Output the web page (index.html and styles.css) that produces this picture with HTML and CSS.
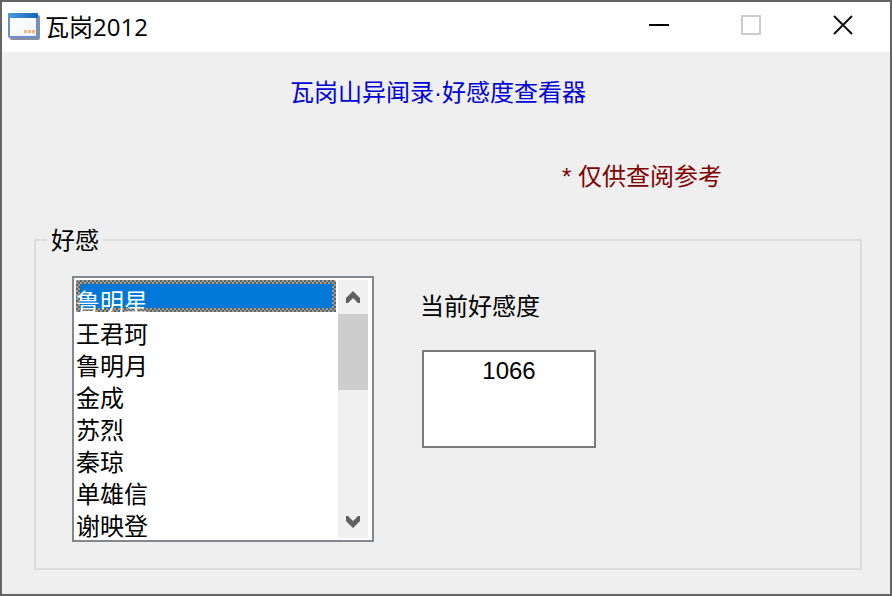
FILE: index.html
```html
<!DOCTYPE html>
<html lang="zh-CN">
<head>
  <meta charset="UTF-8">
  <meta name="viewport" content="width=device-width, initial-scale=1.0">
  <title>瓦岗2012</title>
  <link rel="stylesheet" href="styles.css">
</head>
<body>
  <div class="window">
    <!-- 标题栏 -->
    <header class="titlebar">
      <svg class="app-icon" width="32" height="28" viewBox="0 0 32 28">
        <defs>
          <linearGradient id="bar" x1="0" x2="1" y1="0" y2="0">
            <stop offset="0" stop-color="#4c9be0"/>
            <stop offset="1" stop-color="#1763b6"/>
          </linearGradient>
          <linearGradient id="pane" x1="0" x2="1" y1="0" y2="1">
            <stop offset="0" stop-color="#ffffff"/>
            <stop offset="1" stop-color="#eef3fb"/>
          </linearGradient>
        </defs>
        <rect x="2" y="2" width="30" height="25" rx="2" fill="#8a909c"/>
        <rect x="0" y="0" width="30" height="25" rx="2" fill="#6b8fca"/>
        <rect x="2" y="4" width="26" height="19" fill="url(#pane)"/>
        <rect x="0" y="0" width="30" height="5" rx="1" fill="url(#bar)"/>
        <path d="M16 17h3v3h-3zM20 17h3v3h-3zM24 17h3v3h-3z" fill="#f0b870"/>
      </svg>
      <h1 class="title">瓦岗2012</h1>
      <div class="controls">
        <button class="control" type="button" aria-label="最小化">
          <svg width="20" height="20" viewBox="0 0 20 20"><path d="M0 10h20" stroke="#000" stroke-width="2"/></svg>
        </button>
        <button class="control" type="button" aria-label="最大化" disabled>
          <svg width="20" height="20" viewBox="0 0 20 20"><path d="M1 1h18v18H1z" fill="none" stroke="#ccc" stroke-width="2"/></svg>
        </button>
        <button class="control" type="button" aria-label="关闭">
          <svg width="20" height="20" viewBox="0 0 20 20"><path d="M1 1l18 18M19 1L1 19" stroke="#111" stroke-width="2"/></svg>
        </button>
      </div>
    </header>

    <main class="content">
      <h2 class="heading">瓦岗山异闻录·好感度查看器</h2>
      <p class="note">* 仅供查阅参考</p>

      <fieldset class="group">
        <legend class="legend">好感</legend>
        <div class="listbox">
          <select class="names" size="8" aria-label="好感">
            <option class="name" selected>鲁明星</option>
            <option class="name">王君珂</option>
            <option class="name">鲁明月</option>
            <option class="name">金成</option>
            <option class="name">苏烈</option>
            <option class="name">秦琼</option>
            <option class="name">单雄信</option>
            <option class="name">谢映登</option>
          </select>
          <div class="scroll">
            <button class="arrow" type="button" aria-label="向上">
              <svg width="16" height="14" viewBox="0 0 16 14"><path d="M8 1l7 7v5h-2L8 8l-5 5H1V8z" fill="#606060"/></svg>
            </button>
            <div class="thumb"></div>
            <button class="arrow arrow-down" type="button" aria-label="向下">
              <svg width="16" height="14" viewBox="0 0 16 14"><path d="M8 14l7-7V2h-2L8 7 3 2H1v5z" fill="#606060"/></svg>
            </button>
          </div>
        </div>
        <div class="field">
          <label class="label" for="value">当前好感度</label>
          <textarea class="value" id="value">1066</textarea>
        </div>
      </fieldset>
    </main>
  </div>
</body>
</html>
```
FILE: styles.css
```css
*{
  box-sizing: border-box;
}
body{
  margin: 0;
  color: #000;
  font-family: "Liberation Sans", "Noto Sans CJK SC", sans-serif;
  font-size: 24px;
  line-height: 32px;
}
.window{
  display: flex;
  flex-direction: column;
  min-height: 100vh;
  border: 2px solid #646464;
  background: #efefef;
}

/* 标题栏 */
.titlebar{
  display: flex;
  align-items: center;
  height: 50px;
  padding-left: 6px;
  background: #fff;
}
.title{
  flex: 1;
  margin: 0 0 0 5px;
  font-family: "Open Sans", "Noto Sans CJK SC", sans-serif;
  font-size: 24px;
  font-weight: 400;
  line-height: 32px;
}
.controls{
  display: flex;
  align-self: flex-start;
  padding-right: 1px;
}
.control{
  display: flex;
  align-items: center;
  justify-content: center;
  width: 92px;
  height: 46px;
  padding: 0;
  border: 0;
  background: none;
}

.content{
  display: flex;
  flex: 1;
  flex-direction: column;
  padding: 25px 28px 24px 32px;
}
.heading{
  margin: 0;
  padding-right: 20px;
  color: #0000d8;
  font-size: 24px;
  font-weight: 400;
  text-align: center;
}
.note{
  margin: 52px 0 0;
  padding-right: 140px;
  color: #800000;
  text-align: right;
}

/* 好感 */
.group{
  display: flex;
  flex: 1;
  gap: 48px;
  align-items: flex-start;
  margin: 30px 0 0;
  padding: 19px 36px 26px;
  border: 2px solid #dcdcdc;
}
.legend{
  margin-left: -25px;
  padding: 2px 4px 0;
}
.listbox{
  display: flex;
  gap: 2px;
  width: 302px;
  height: 266px;
  padding: 2px 4px 2px 2px;
  border: 2px solid #828790;
  background: #fff;
}
.names{
  flex: 1;
  min-width: 0;
  height: 258px;
  padding: 0;
  border: 0;
  outline: 0;
  background: #fff;
  color: #000;
  font: inherit;
  overflow: hidden;
}
.name{
  height: 32px;
  min-height: 32px;
  padding: 3px 0 0;
}
/* 选中项带虚线焦点框 */
.name:checked{
  overflow: hidden;
  background:
    linear-gradient(#0078d7, #0078d7) center / calc(100% - 8px) calc(100% - 8px) no-repeat,
    repeating-conic-gradient(#d0905c 0 25%, #28739f 0 50%) 0 0 / 4px 4px;
  -webkit-text-fill-color: #fff;
}
.scroll{
  display: flex;
  flex-direction: column;
  width: 30px;
  background: #f0f0f0;
}
.arrow{
  display: flex;
  align-items: center;
  justify-content: center;
  height: 34px;
  padding: 0;
  border: 0;
  background: none;
}
.arrow-down{
  margin-top: auto;
}
.thumb{
  height: 76px;
  background: #cdcdcd;
}
.field{
  display: flex;
  flex-direction: column;
  gap: 27px;
  width: 174px;
  padding-top: 15px;
}
.label{
  margin-left: -2px;
}
.value{
  height: 98px;
  padding: 3px;
  border: 2px solid #7a7a7a;
  border-radius: 0;
  outline: 0;
  background: #fff;
  color: #000;
  font: inherit;
  text-align: center;
  resize: none;
}
```
